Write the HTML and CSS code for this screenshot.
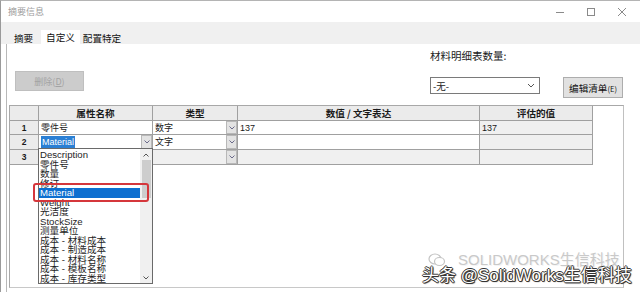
FILE: index.html
```html
<!DOCTYPE html>
<html lang="zh-CN">
<head>
<meta charset="utf-8">
<title>摘要信息</title>
<link rel="stylesheet" href="styles.css">
</head>
<body>
<div class="window">
  <div class="titlebar">
    <span class="title">摘要信息</span>
    <div class="controls">
      <span class="ctl"><svg width="10" height="10" viewBox="0 0 10 10"><path d="M1 5.5H9" stroke="#8a8a8a" stroke-width="1"/></svg></span>
      <span class="ctl"><svg width="10" height="10" viewBox="0 0 10 10"><rect x="1.5" y="1.5" width="7" height="7" fill="none" stroke="#8a8a8a" stroke-width="1"/></svg></span>
      <span class="ctl"><svg width="10" height="10" viewBox="0 0 10 10"><path d="M1 1L9 9M9 1L1 9" stroke="#8a8a8a" stroke-width="1"/></svg></span>
    </div>
  </div>
  <div class="tabbar">
    <span class="tab t1">摘要</span>
    <span class="tab t2 active">自定义</span>
    <span class="tab t3">配置特定</span>
  </div>
  <div class="panel">
    <div class="toolbar">
      <button class="btn-del">删除(<u>D</u>)</button>
      <div class="bom">
        <span class="bom-label">材料明细表数量:</span>
        <span class="select">-无-<svg class="chev" width="8" height="5" viewBox="0 0 8 5"><path d="M1 1L4 4L7 1" fill="none" stroke="#555" stroke-width="1"/></svg></span>
        <button class="btn-edit">编辑清单<small>(E)</small></button>
      </div>
    </div>
    <div class="gridbox">
      <div class="sheet">
        <div class="c hd rn"></div>
        <div class="c hd">属性名称</div>
        <div class="c hd">类型</div>
        <div class="c hd">数值 / 文字表达</div>
        <div class="c hd">评估的值</div>

        <div class="c rn r1">1</div>
        <div class="c r1">零件号</div>
        <div class="c r1 dd-cell">数字<span class="dd"><svg width="6" height="4" viewBox="0 0 6 4"><path d="M0.5 0.5L3 3L5.5 0.5" fill="none" stroke="#6a6a8a" stroke-width="1"/></svg></span></div>
        <div class="c r1">137</div>
        <div class="c r1 ro">137</div>

        <div class="c rn r2">2</div>
        <div class="c r2 dd-cell"><span class="sel">Material</span><span class="dd"><svg width="6" height="4" viewBox="0 0 6 4"><path d="M0.5 0.5L3 3L5.5 0.5" fill="none" stroke="#6a6a8a" stroke-width="1"/></svg></span></div>
        <div class="c r2 dd-cell">文字<span class="dd"><svg width="6" height="4" viewBox="0 0 6 4"><path d="M0.5 0.5L3 3L5.5 0.5" fill="none" stroke="#6a6a8a" stroke-width="1"/></svg></span></div>
        <div class="c r2"></div>
        <div class="c r2 ro"></div>

        <div class="c rn r3">3</div>
        <div class="c r3"></div>
        <div class="c r3 ro dd-cell"><span class="dd"><svg width="6" height="4" viewBox="0 0 6 4"><path d="M0.5 0.5L3 3L5.5 0.5" fill="none" stroke="#6a6a8a" stroke-width="1"/></svg></span></div>
        <div class="c r3 ro"></div>
        <div class="c r3 ro"></div>
      </div>
    </div>
  </div>
</div>

<div class="droplist">
  <ul class="items">
    <li>Description</li>
    <li>零件号</li>
    <li>数量</li>
    <li>修订</li>
    <li class="hl">Material</li>
    <li>Weight</li>
    <li>光洁度</li>
    <li>StockSize</li>
    <li>测量单位</li>
    <li>成本 - 材料成本</li>
    <li>成本 - 制造成本</li>
    <li>成本 - 材料名称</li>
    <li>成本 - 模板名称</li>
    <li>成本 - 库存类型</li>
  </ul>
  <div class="scroll">
    <span class="arrow"><svg width="6" height="4" viewBox="0 0 6 4"><path d="M0.5 3.5L3 1L5.5 3.5" fill="none" stroke="#555" stroke-width="1"/></svg></span>
    <span class="thumb"></span>
    <span class="track"></span>
    <span class="arrow"><svg width="6" height="4" viewBox="0 0 6 4"><path d="M0.5 0.5L3 3L5.5 0.5" fill="none" stroke="#555" stroke-width="1"/></svg></span>
  </div>
</div>
<div class="redbox"></div>

<div class="wm1"><svg width="18" height="14" viewBox="0 0 18 14"><ellipse cx="7" cy="6" rx="6" ry="5" fill="none" stroke="#c4c4c4" stroke-width="1.2"/><ellipse cx="11.5" cy="8.5" rx="5" ry="4" fill="#fff" stroke="#c4c4c4" stroke-width="1.2"/></svg><span>SOLIDWORKS生信科技</span></div>
<div class="wm2">头条 @SolidWorks生信科技</div>
</body>
</html>
```
FILE: styles.css
```css
* { box-sizing: border-box; }
html, body { margin: 0; padding: 0; }
body {
  width: 640px;
  height: 292px;
  overflow: hidden;
  background: #fff;
  font-family: "Noto Sans CJK SC", "Liberation Sans", sans-serif;
  color: #1a1a1a;
}
.window {
  height: 292px;
  border-top: 1px solid #b4b4b4;
  border-left: 1px solid #9a9a9a;
  display: flex;
  flex-direction: column;
  background: #fff;
}
.titlebar {
  height: 21px;
  flex: none;
  display: flex;
  align-items: center;
  padding-left: 7px;
  padding-right: 3px;
}
.title { font-size: 9px; color: #9c9c9c; line-height: 1; }
.controls { margin-left: auto; display: flex; }
.ctl { width: 31px; height: 21px; display: flex; align-items: center; justify-content: center; }

.tabbar {
  height: 22px;
  flex: none;
  background: #f0f0f0;
  display: flex;
  align-items: flex-end;
  padding-left: 5px;
}
.tab {
  font-size: 9.6px;
  line-height: 12px;
  height: 12px;
  display: flex;
  align-items: center;
  justify-content: center;
  color: #111;
}
.t1 { width: 35px; }
.t2 { width: 39px; }
.t3 { width: 44px; }
.tab.active { background: #fff; height: 14px; }

.panel {
  flex: 1;
  margin-left: 5px;
  border-left: 1px solid #b8b8b8;
  display: flex;
  flex-direction: column;
  min-height: 0;
}
.toolbar {
  height: 61px;
  flex: none;
  display: flex;
  padding-left: 8px;
  padding-right: 17px;
}
.btn-del {
  margin-top: 27px;
  width: 69px;
  height: 20px;
  background: #cccccc;
  border: 1px solid #bfbfbf;
  color: #a3a3a3;
  font-family: inherit;
  font-size: 9px;
  padding: 0;
}
.btn-del u { text-decoration: underline; }
.bom {
  margin-left: auto;
  display: grid;
  grid-template-columns: 110px 60px;
  column-gap: 23px;
  align-items: start;
  padding-top: 5px;
}
.bom-label {
  grid-column: 1 / 3;
  font-size: 10.5px;
  line-height: 13px;
  height: 13px;
  margin-bottom: 8px;
  color: #1a1a1a;
}
.select {
  height: 17px;
  border: 1px solid #7a7a7a;
  background: #fff;
  font-size: 9.5px;
  display: flex;
  align-items: center;
  padding-left: 2px;
  padding-right: 4px;
}
.select .chev { margin-left: auto; }
.btn-edit {
  height: 21px;
  width: 60px;
  background: #e1e1e1;
  border: 1px solid #adadad;
  font-family: inherit;
  font-size: 9.6px;
  padding: 0;
  color: #111;
  white-space: nowrap;
}
.btn-edit small { font-size: 7.5px; }

.gridbox {
  margin-left: 2px;
  width: 615px;
  height: 183px;
  border: 1px solid #a8a8a8;
  border-bottom-color: #c8c8c8;
  border-right-color: #c0c0c0;
}
.sheet {
  display: grid;
  grid-template-columns: 29px 114px 85px 242px 113px;
  grid-template-rows: 15px 14px 15px 15px;
}
.c {
  border-right: 1px solid #a0a0a0;
  border-bottom: 1px solid #a0a0a0;
  font-size: 9px;
  line-height: 12px;
  padding-left: 2px;
  display: flex;
  align-items: center;
  background: #fff;
  overflow: hidden;
  white-space: nowrap;
}
.hd {
  background: #ebebeb;
  font-weight: bold;
  justify-content: center;
  padding-left: 0;
  font-size: 9.6px;
}
.rn {
  background: #ebebeb;
  justify-content: center;
  padding-left: 0;
  font-family: "Liberation Sans", sans-serif;
  font-weight: bold;
  font-size: 8.5px;
}
.ro { background: #f0f0f0; }
.r1:not(.rn), .r2:not(.rn) { font-family: "Liberation Sans", "Noto Sans CJK SC", sans-serif; }
.dd-cell { padding-right: 0; }
.dd {
  margin-left: auto;
  width: 11px;
  align-self: stretch;
  background: #e3e3e3;
  border: 1px solid #b8b8b8;
  display: flex;
  align-items: center;
  justify-content: center;
}
.sel {
  background: #2a7fd4;
  color: #fff;
  padding: 0 1px;
  line-height: 12px;
}

.droplist {
  position: absolute;
  left: 38px;
  top: 148px;
  width: 115px;
  height: 136px;
  border: 1px solid #6a6a6a;
  background: #fff;
  display: flex;
}
.items {
  list-style: none;
  margin: 0;
  padding: 1px 0 0;
  width: 101px;
  flex: none;
}
.items li {
  font-family: "Liberation Sans", "Noto Sans CJK SC", sans-serif;
  font-size: 9.6px;
  line-height: 9.5px;
  height: 9.5px;
  padding-left: 1px;
  color: #1e1e1e;
  white-space: nowrap;
}
.items li.hl { background: #0d6fd0; color: #fff; }
.scroll {
  flex: 1;
  background: #f0f0f0;
  display: flex;
  flex-direction: column;
  align-items: center;
}
.scroll .arrow { height: 11px; display: flex; align-items: center; justify-content: center; width: 100%; }
.scroll .thumb { width: 9px; height: 38px; background: #cdcdcd; }
.scroll .track { flex: 1; }

.redbox {
  position: absolute;
  left: 33px;
  top: 183px;
  width: 116px;
  height: 19px;
  border: 2px solid #d5363b;
  border-radius: 3px;
}

.wm1 {
  position: absolute;
  left: 428px;
  top: 253px;
  display: flex;
  align-items: center;
  gap: 12px;
  color: #c9c9c9;
  font-family: "Liberation Sans", "Noto Sans CJK SC", sans-serif;
  font-size: 15px;
  line-height: 14px;
  height: 14px;
  text-shadow: 1px 1px 0 #f4f4f4;
}
.wm2 {
  position: absolute;
  left: 422px;
  top: 267px;
  color: #fff;
  font-family: "Liberation Sans", "Noto Sans CJK SC", sans-serif;
  font-size: 17px;
  line-height: 17px;
  height: 17px;
  white-space: nowrap;
  text-shadow: -1px 0 0 #333, 1px 0 0 #333, 0 -1px 0 #333, 0 1px 0 #333, 1px 1px 1px #222;
}
```
